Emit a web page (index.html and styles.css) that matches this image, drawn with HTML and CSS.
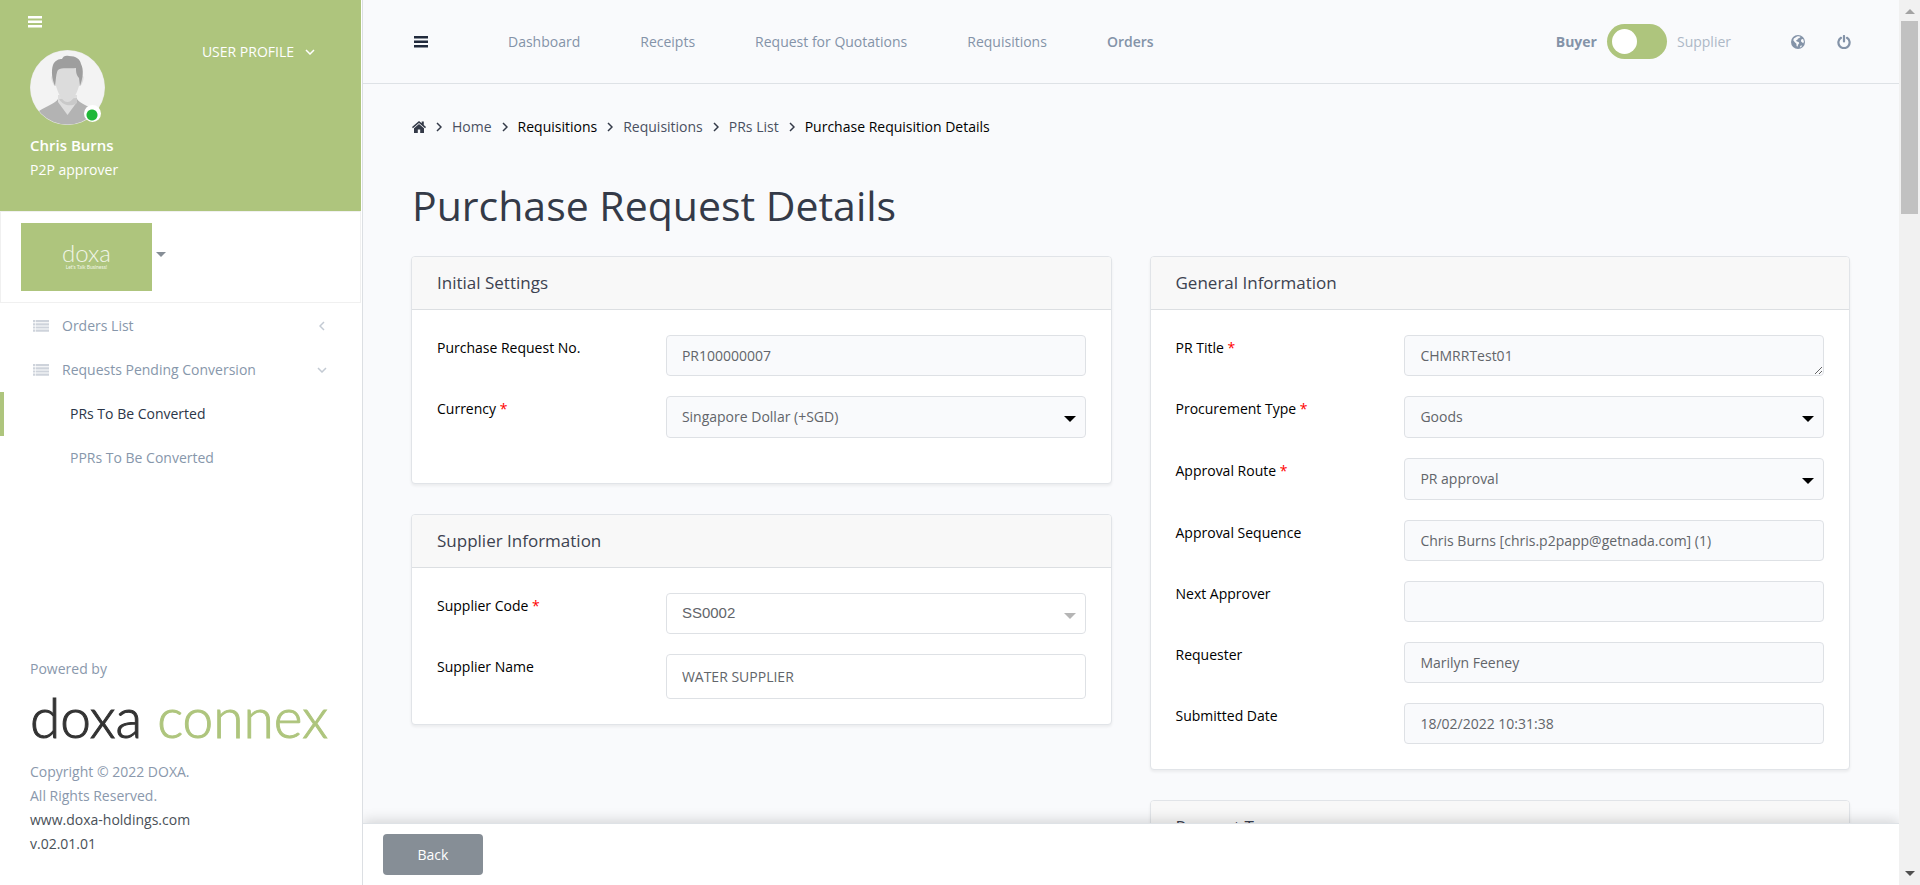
FILE: index.html
```html
<!DOCTYPE html>
<html lang="en">
<head>
<meta charset="utf-8">
<title>Purchase Request Details</title>
<link rel="stylesheet" href="styles.css">
</head>
<body>
<svg class="defs" aria-hidden="true">
  <symbol id="bars" viewBox="0 0 14 12"><path d="M0 0h14v2.6H0zM0 4.5h14v2.6H0zM0 9h14v2.6H0z" fill="currentColor"/></symbol>
  <symbol id="list" viewBox="0 0 16 12"><path d="M0 0h2.4v2.200H0zM3 0H16v2.200H3zM0 3.200h2.400v2.200H0zM3 3.200H16v2.200H3zM0 6.400h2.400v2.200H0zM3 6.400H16v2.200H3zM0 9.600h2.400v2.200H0zM3 9.600H16v2.200H3z" fill="currentColor"/></symbol>
  <symbol id="chev" viewBox="0 0 6 10"><path d="M1 1l4 4-4 4" fill="none" stroke="currentColor" stroke-width="1.500"/></symbol>
</svg>
<div class="app">
  <aside class="sidebar">
    <section class="profile">
      <button class="icon-btn profile-menu" aria-label="Toggle sidebar"><svg width="14" height="12"><use href="#bars"/></svg></button>
      <div class="profile-row">
        <div class="avatar">
          <svg width="75" height="75" viewBox="0 0 75 75" role="img" aria-label="Avatar">
            <defs><clipPath id="round"><circle cx="37.500" cy="37.500" r="37"/></clipPath></defs>
            <circle cx="37.500" cy="37.500" r="37.500" fill="#e4e6e0"/>
            <g clip-path="url(#round)">
              <rect width="75" height="75" fill="#f3f3f3"/>
              <path d="M28 49c-2 4-13 8-19 12v14h57V61c-6-4-17-8-19-12z" fill="#b3b3b3"/>
              <path d="M28 45v7l9.500 13L47 52v-7z" fill="#dedede"/>
              <path d="M29 49c4 7 13 8 18 4v-5z" fill="#c9c9c9"/>
              <path d="M24 25c-3 0-3 3-2 6 1 3 2 5 4 5 3 10 7 16 11.500 16S46 46 49 36c2 0 3-2 4-5 1-3 1-6-2-6L46 15H28z" fill="#dcdcdc"/>
              <path d="M25 36c-3-7-4-15-2-21 2-5 6-6 9-6 1-3 4-4 7-3 7 0 11 3 12 8 3 6 2 14-1 22l-1-8c-3-3-3-7-3-10-7 1-14-1-18 2-2 3-2 10-3 16z" fill="#9e9e9e"/>
            </g>
          </svg>
          <span class="online"></span>
        </div>
        <button class="user-profile">USER PROFILE <svg class="down" width="6" height="10"><use href="#chev"/></svg></button>
      </div>
      <div class="name">Chris Burns</div>
      <div class="role">P2P approver</div>
    </section>
    <section class="company">
      <button class="company-btn" aria-label="doxa, choose company"><span class="company-logo"><span class="company-name">doxa</span><span class="company-tag">Let's Talk Business!</span></span><span class="caret"></span></button>
    </section>
    <nav class="menu">
      <a class="item" href="#"><svg width="16" height="12"><use href="#list"/></svg><span>Orders List</span><svg class="arrow left" width="6" height="10"><use href="#chev"/></svg></a>
      <a class="item" href="#"><svg width="16" height="12"><use href="#list"/></svg><span>Requests Pending Conversion</span><svg class="arrow down" width="6" height="10"><use href="#chev"/></svg></a>
      <a class="item sub active" href="#">PRs To Be Converted</a>
      <a class="item sub" href="#">PPRs To Be Converted</a>
    </nav>
    <footer class="about">
      <div>Powered by</div>
      <div class="brand">doxa <span>connex</span></div>
      <div>Copyright © 2022 DOXA.</div>
      <div>All Rights Reserved.</div>
      <div><a href="#">www.doxa-holdings.com</a></div>
      <div class="dark">v.02.01.01</div>
    </footer>
  </aside>

  <main class="main">
    <header class="topbar">
      <button class="icon-btn burger" aria-label="Toggle menu"><svg width="14" height="12"><use href="#bars"/></svg></button>
      <nav class="tabs">
        <a href="#">Dashboard</a><a href="#">Receipts</a><a href="#">Request for Quotations</a><a href="#">Requisitions</a><a class="current" href="#">Orders</a>
      </nav>
      <div class="tools">
        <label class="switch"><b>Buyer</b><input type="checkbox" role="switch"><span>Supplier</span></label>
        <button class="icon-btn" aria-label="Language"><svg width="14" height="14" viewBox="0 0 14 14"><circle cx="7" cy="7" r="7" fill="currentColor"/><path d="M6 1.500c2-.5 3 0 3.600.4L8 3.200l-1 .4-.6 1.200-1.400.8.8.9 1.800.5.6 1.200-1 1.400-.8 2.200-.8-.7-.2-2.400L3.600 7 2.300 5.300 2.800 3.400zM10.600 4.200l1.500-.2.8 2.600-.6 1.700-1-.8-1.100-.8-.2-1.400zM9.400 10.800l1.800-.4-1 1.500-1.300.5z" fill="#f9fafc"/></svg></button>
        <button class="icon-btn" aria-label="Log out"><svg width="14" height="14" viewBox="0 0 14 14"><path d="M4 2.800a5.600 5.600 0 1 0 6 0" fill="none" stroke="currentColor" stroke-width="2.200" stroke-linecap="round"/><path d="M7 1v5.500" stroke="currentColor" stroke-width="2.200" stroke-linecap="round"/></svg></button>
      </div>
    </header>

    <div class="content">
      <nav class="crumbs" aria-label="Breadcrumb">
        <svg width="14" height="12" viewBox="0 0 14 12"><path d="M7 0L0 6l.9 1.200L7 2l6.100 5.200L14 6l-2.200-1.900V.6H9.700v1.700z" fill="currentColor"/><path d="M7 3L2 7.300V12h3.800V8.600h2.400V12H12V7.300z" fill="currentColor"/></svg>
        <svg width="6" height="10"><use href="#chev"/></svg>
        <a href="#">Home</a>
        <svg width="6" height="10"><use href="#chev"/></svg>
        <span>Requisitions</span>
        <svg width="6" height="10"><use href="#chev"/></svg>
        <a href="#">Requisitions</a>
        <svg width="6" height="10"><use href="#chev"/></svg>
        <a href="#">PRs List</a>
        <svg width="6" height="10"><use href="#chev"/></svg>
        <span>Purchase Requisition Details</span>
      </nav>
      <h1>Purchase Request Details</h1>
      <div class="columns">
        <div class="column">
          <section class="card">
            <h2>Initial Settings</h2>
            <div class="fields roomy">
              <label for="prno">Purchase Request No.</label>
              <input id="prno" type="text" value="PR100000007" readonly>
              <label for="currency">Currency <i>*</i></label>
              <div class="select"><select id="currency"><option>Singapore Dollar (+SGD)</option></select></div>
            </div>
          </section>
          <section class="card">
            <h2>Supplier Information</h2>
            <div class="fields editable">
              <label for="code">Supplier Code <i>*</i></label>
              <div class="select light"><select id="code"><option>SS0002</option></select></div>
              <label for="supplier">Supplier Name</label>
              <input id="supplier" class="tall" type="text" value="WATER SUPPLIER">
            </div>
          </section>
        </div>
        <div class="column">
          <section class="card">
            <h2>General Information</h2>
            <div class="fields">
              <label for="title">PR Title <i>*</i></label>
              <textarea id="title" rows="1" readonly>CHMRRTest01</textarea>
              <label for="ptype">Procurement Type <i>*</i></label>
              <div class="select"><select id="ptype"><option>Goods</option></select></div>
              <label for="route">Approval Route <i>*</i></label>
              <div class="select"><select id="route"><option>PR approval</option></select></div>
              <label for="seq">Approval Sequence</label>
              <input id="seq" type="text" value="Chris Burns [chris.p2papp@getnada.com] (1)" readonly>
              <label for="next">Next Approver</label>
              <input id="next" type="text" readonly>
              <label for="requester">Requester</label>
              <input id="requester" type="text" value="Marilyn Feeney" readonly>
              <label for="date">Submitted Date</label>
              <input id="date" type="text" value="18/02/2022 10:31:38" readonly>
            </div>
          </section>
          <section class="card">
            <h2>Request Terms</h2>
            <div class="fields"></div>
          </section>
        </div>
      </div>
    </div>

    <footer class="actions"><button class="back">Back</button></footer>
  </main>

  <div class="scrollbar" aria-hidden="true"><span class="up"></span><span class="thumb"></span><span class="dn"></span></div>
</div>
</body>
</html>
```
FILE: styles.css
```css
* { box-sizing: border-box; }
body {
  margin: 0;
  font: 14px/24px "Open Sans", "Noto Sans", sans-serif;
  color: #000;
  background: #f9fafc;
}
a { color: inherit; text-decoration: none; }
button, input, select, textarea { font: inherit; color: inherit; }
button { border: 0; background: none; padding: 0; }
svg { display: block; flex: none; }
.defs { position: absolute; width: 0; height: 0; }
.down { transform: rotate(90deg); }
.left { transform: rotate(180deg); }
.app { display: flex; height: 100vh; overflow: hidden; }
.icon-btn { display: flex; }

/* Sidebar */
.sidebar {
  flex: none;
  width: 363px;
  display: flex;
  flex-direction: column;
  background: #fff;
  border-right: 1px solid #dcdfe3;
}
.profile {
  height: 211px;
  margin-right: 1px;
  padding: 16px 30px 0;
  background: #aec57d;
  color: #fff;
}
.profile-menu { margin: 0 0 22px -2px; }
.profile-row { display: flex; justify-content: space-between; align-items: flex-start; margin-bottom: 8px; }
.avatar { position: relative; }
.online {
  position: absolute;
  right: 4px;
  bottom: 3px;
  width: 17px;
  height: 17px;
  border-radius: 50%;
  background: radial-gradient(circle at 8px 10px, #20b838 5px, #fff 6px);
}
.user-profile { display: flex; align-items: center; gap: 13px; margin: -10px 18px 0 0; }
.name { font-size: 15px; font-weight: 600; }
.role { line-height: 26px; }
.company { margin-right: 1px; padding: 11px 20px; border: 1px solid #f0f0f0; }
.company-btn { display: flex; align-items: center; gap: 4px; }
.company-logo {
  display: flex;
  flex-direction: column;
  align-items: center;
  justify-content: center;
  width: 131px;
  height: 68px;
  background: #aec57d;
  color: #f1f5e8;
  font-family: Lato, sans-serif;
}
.company-name { font-size: 24px; line-height: 20px; font-weight: 300; }
.company-tag { font-size: 5px; line-height: 8px; }
.caret { margin-bottom: 6px; border: 5px solid transparent; border-top-color: #868e96; border-bottom: 0; }
.menu { flex: 1; padding-top: 1px; color: #8797ab; }
.item { display: flex; align-items: center; height: 44px; padding: 0 37px 0 33px; gap: 13px; }
.item svg { color: #ced3db; }
.item .arrow { margin-left: auto; color: #c3cad3; }
.sub { padding-left: 66px; border-left: 4px solid transparent; }
.active { border-left-color: #aec57d; color: #2b3648; }
.about { padding: 0 30px 29px; color: #8a98ac; }
.about a, .dark { color: #495057; }
.brand {
  margin: 6px 0 13px;
  font: 300 55px/60px Lato, sans-serif;
  -webkit-text-stroke: 1px currentColor;
  color: #333;
  white-space: nowrap;
}
.brand span { color: #aec57d; }

/* Header */
.main { flex: 1; min-width: 0; display: flex; flex-direction: column; overflow: hidden; }
.topbar {
  flex: none;
  display: flex;
  align-items: center;
  height: 84px;
  padding: 0 48px 0 51px;
  border-bottom: 1px solid #dee2e6;
  color: #8493a8;
}
.burger { color: #212a3c; margin-right: 80px; }
.tabs { display: flex; gap: 60px; }
.current { font-weight: 600; }
.tools { display: flex; align-items: center; gap: 32px; margin-left: auto; }
.switch { display: flex; align-items: center; gap: 10px; margin-right: 28px; }
.switch span { color: #adb8c6; }
.switch input {
  appearance: none;
  display: flex;
  align-items: center;
  width: 60px;
  height: 35px;
  margin: 0;
  padding: 5px;
  border-radius: 18px;
  background: #aec57d;
}
.switch input::before { content: ""; width: 25px; height: 25px; border-radius: 50%; background: #fff; }
.switch input:checked { justify-content: flex-end; }

/* Content */
.content { flex: 1; min-height: 0; overflow: hidden; padding: 31px 49px 0 48px; }
.crumbs { display: flex; align-items: center; gap: 10px; padding-left: 1px; color: #343a48; }
.crumbs a { color: #495061; }
.crumbs span { color: #000; }
h1 { margin: 37px 0 22px; padding-left: 1px; font-size: 41px; line-height: 58px; font-weight: 400; color: #343a48; }
.columns { display: grid; grid-template-columns: 1fr 1fr; gap: 38px; }
.column { display: flex; flex-direction: column; gap: 30px; }
.card {
  border: 1px solid #e1e4e8;
  border-radius: 4px;
  background: #fff;
  box-shadow: 0 2px 3px rgba(0, 0, 0, 0.06);
  overflow: hidden;
}
h2 {
  margin: 0;
  padding: 14px 25px;
  border-bottom: 1px solid #dcdfe2;
  background: #f8f8f8;
  font-size: 17px;
  line-height: 24px;
  font-weight: 400;
  color: #3c4250;
}
.fields {
  display: grid;
  grid-template-columns: minmax(0, 6fr) minmax(0, 11fr);
  row-gap: 20px;
  padding: 25px;
}
.fields label { padding-top: 1px; }
.roomy { padding-bottom: 45px; }
.fields i { color: #f00; font-style: normal; }
.fields input, .fields textarea, .fields select {
  display: block;
  width: 100%;
  height: 41px;
  margin: 0;
  padding: 0 15px;
  border: 1px solid #dee1e5;
  border-radius: 4px;
  background: #f9fafc;
  color: #62656a;
  outline: 0;
}
.fields textarea { padding: 8px 15px; resize: vertical; overflow: hidden; }
.fields select { appearance: none; height: 42px; }
.fields.editable input, .fields.editable select { background: #fff; }
.fields .tall { height: 45px; }
.select { position: relative; }
.select::after {
  content: "";
  position: absolute;
  right: 10px;
  top: 20px;
  border: 6px solid transparent;
  border-top-color: #000;
  border-bottom: 0;
  pointer-events: none;
}
.light::after { border-top-color: #b5b5b5; }
.fields .light select { height: 41px; padding-bottom: 2px; font: 15px/24px "Liberation Sans", Arial, sans-serif; }

.actions {
  flex: none;
  position: relative;
  padding: 10px 20px;
  border-top: 1px solid #dee2e6;
  background: #fff;
  box-shadow: 0 -3px 12px rgba(0, 0, 0, 0.14);
}
.back { display: block; width: 100px; height: 41px; padding-top: 1px; border-radius: 4px; background: #868e96; color: #fff; }

/* Scroll track */
.scrollbar {
  position: relative;
  flex: none;
  display: flex;
  flex-direction: column;
  align-items: center;
  width: 21px;
  padding: 9px 0;
  background: #f1f1f1;
}
.up, .dn { border: 5px solid transparent; }
.up { border-top: 0; border-bottom-color: #a3a3a3; }
.dn { border-bottom: 0; border-top-color: #505050; margin-top: auto; }
.thumb { width: 17px; height: 193px; margin-top: 7px; background: #c1c1c1; }
```
